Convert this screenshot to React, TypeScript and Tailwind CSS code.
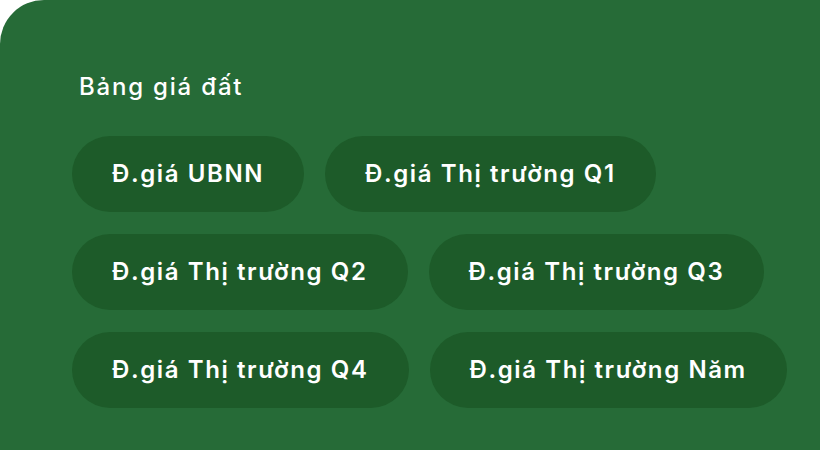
const options = [
  ["Đ.giá UBNN", "Đ.giá Thị trường Q1"],
  ["Đ.giá Thị trường Q2", "Đ.giá Thị trường Q3"],
  ["Đ.giá Thị trường Q4", "Đ.giá Thị trường Năm"],
];

const App = () => {
  return (
    <div className="h-[450px] w-[820px] overflow-hidden bg-white">
      <div
        className="h-full w-full rounded-tl-[44px] bg-[#266b37] pl-[72px] pt-[70px] text-white"
        style={{ fontFamily: "Inter, 'Noto Sans', sans-serif" }}
      >
        <h2 className="pl-[7px] text-[24px] font-medium leading-[34px] tracking-[1.8px]">
          Bảng giá đất
        </h2>
        <div className="mt-[32px] flex flex-col gap-[22px]">
          {options.map((row, i) => (
            <div key={i} className="flex gap-[21px]">
              {row.map((label) => (
                <button
                  key={label}
                  className="h-[76px] rounded-full bg-[#1d5b29] px-[40px] text-[24px] font-semibold tracking-[1.6px] text-white"
                >
                  {label}
                </button>
              ))}
            </div>
          ))}
        </div>
      </div>
    </div>
  );
};

export default App;
